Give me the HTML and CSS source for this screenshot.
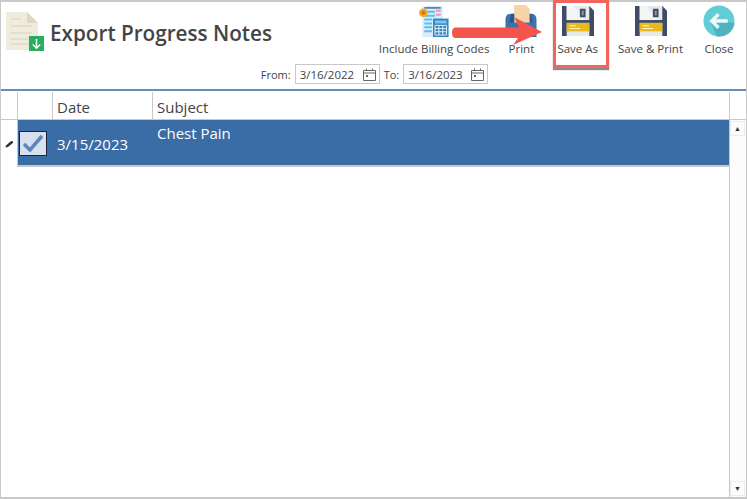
FILE: index.html
```html
<!DOCTYPE html>
<html lang="en">
  <head>
    <meta charset="UTF-8" />
    <title>Export Progress Notes</title>
    <link rel="stylesheet" href="styles.css">
  </head>
  <body>
    <div class="window">
      <header class="header">
        <div class="header-top">
          <div class="brand">
            <svg class="brand-icon" viewBox="0 0 40 40" width="40" height="40">
              <path d="M0 0H21L32 11V38H0Z" fill="#efebdd"/>
              <path d="M21 0L32 11H21Z" fill="#dcd8c4"/>
              <path d="M5 7H15M5 14H26M5 21H26M5 27H26M5 32H26" stroke="#e0dcc9" stroke-width="1.4"/>
              <rect x="23" y="24" width="15" height="15" fill="#27ae60"/>
              <path d="M30.5 27V36M26.800 32.500L30.500 36.200L34.200 32.500" stroke="#fff" stroke-width="1.500" fill="none"/>
            </svg>
            <h1 class="title">Export Progress Notes</h1>
          </div>
          <nav class="actions">
            <button type="button" class="action action-billing">
              <svg viewBox="0 0 32 33" width="32" height="33">
                <rect x="4" y="1" width="21" height="32" fill="#d8edf9"/>
                <path d="M6 3H23" stroke="#3a6ea5" stroke-width="1.500"/>
                <path d="M6 7H17M6 11H17M6 15H14M6 19H14M6 23H14M6 27H14" stroke="#62bbe8" stroke-width="2"/>
                <path d="M18 6H23M18 10H23" stroke="#e89ab0" stroke-width="2"/>
                <circle cx="5" cy="8" r="4.500" fill="#f5a623"/>
                <circle cx="5" cy="8" r="2" fill="#c9791a"/>
                <rect x="15" y="14" width="16" height="19" fill="#2f86c1"/>
                <rect x="17" y="16" width="12" height="3" fill="#7fc6ee"/>
                <path d="M17 21H29V31H17ZM21 21V31M25 21V31M17 24.300H29M17 27.600H29" stroke="#e4f3fc" stroke-width="1" fill="none"/>
              </svg>
              <span>Include Billing Codes</span>
            </button>
            <button type="button" class="action">
              <svg viewBox="0 0 32 33" width="32" height="33">
                <path d="M9 0H21L25 4V18H9Z" fill="#f8d5a8"/>
                <path d="M0 15Q0 9 6 9H9V18H25V9H26Q32 9 32 15V33H0Z" fill="#3d73ab"/>
                <path d="M6 9H9V18H25V9H26L28 18H4Z" fill="#2a5887"/>
              </svg>
              <span>Print</span>
            </button>
            <button type="button" class="action">
              <svg viewBox="0 0 34 32" width="32" height="33">
                <use href="#floppy"/>
              </svg>
              <span>Save As</span>
            </button>
            <button type="button" class="action">
              <svg viewBox="0 0 34 32" width="32" height="33">
                <use href="#floppy"/>
              </svg>
              <span>Save &amp; Print</span>
            </button>
            <button type="button" class="action">
              <svg viewBox="0 0 32 33" width="32" height="33">
                <circle cx="16" cy="16.500" r="16" fill="#62cdd6"/>
                <path d="M24 17L32 19A16 16 0 0 1 14 32.400L7 17Z" fill="#4eb3bf"/>
                <path d="M25 16.500H9M15.500 9.500L8.500 16.500L15.500 23.500" stroke="#eef8f9" stroke-width="3.500" fill="none"/>
              </svg>
              <span>Close</span>
            </button>
          </nav>
        </div>
        <div class="dates">
          <label class="date-label">From:
            <span class="date-box">3/16/2022 <svg class="cal"><use href="#calendar"/></svg></span>
          </label>
          <label class="date-label">To:
            <span class="date-box">3/16/2023 <svg class="cal"><use href="#calendar"/></svg></span>
          </label>
        </div>
      </header>

      <div class="grid">
        <div class="grid-main">
          <div class="row head">
            <div class="cell c-ind"></div>
            <div class="cell c-check"></div>
            <div class="cell c-date">Date</div>
            <div class="cell c-subject">Subject</div>
          </div>
          <div class="row selected">
            <div class="cell c-ind">
              <svg viewBox="0 0 9 8" width="9" height="8"><path d="M0.500 7.500L1 5.500L5.500 1.500Q7 0.500 8 1.500Q8.500 2.500 7.500 3.200L3 7Z" fill="#333"/></svg>
            </div>
            <div class="cell c-check">
              <span class="checkbox">
                <svg viewBox="0 0 22 20" width="22" height="20"><path d="M2 10L8 16L20 2" stroke="#5b86ba" stroke-width="3.500" fill="none"/></svg>
              </span>
            </div>
            <div class="cell c-date">3/15/2023</div>
            <div class="cell c-subject">Chest Pain</div>
          </div>
        </div>
        <div class="scrollbar">
          <div class="scroll-corner"></div>
          <div class="scroll-track">
            <span class="scroll-btn">&#9650;</span>
            <span class="scroll-btn">&#9660;</span>
          </div>
        </div>
      </div>

      <div class="callout"></div>
      <svg class="arrow" viewBox="0 0 92 32" width="92" height="32">
        <path d="M4 12.500H67L62 2L90 17L61 30L66 23H4Q0 23 0 17.500Q0 12.500 4 12.500Z" fill="#f4544c"/>
      </svg>
    </div>

    <svg width="0" height="0" class="defs">
      <symbol id="floppy" viewBox="0 0 34 32">
        <path d="M0 0H29L34 5V32H0Z" fill="#3f4b67"/>
        <rect x="5" y="0" width="24" height="15" fill="#e6ebea"/>
        <path d="M5 0H12L24 15H5Z" fill="#f4f6f5"/>
        <rect x="19" y="3" width="6" height="9" fill="#3f4b67"/>
        <rect x="21" y="5" width="2" height="5" fill="#8f97a8"/>
        <rect x="5" y="18" width="24" height="14" fill="#e6ebea"/>
        <rect x="5" y="18" width="24" height="9" fill="#ecb91c"/>
        <path d="M8 21H15M8 24H19" stroke="#fdf3c8" stroke-width="1.200"/>
      </symbol>
      <symbol id="calendar" viewBox="0 0 13 13">
        <path d="M0.500 2.500H12.500V12.500H0.500ZM0.500 5H12.500M3.500 0.500V3M9.500 0.500V3" stroke="#666" fill="none"/>
        <rect x="3" y="7" width="2" height="2" fill="#666"/>
      </symbol>
    </svg>
  </body>
</html>
```

FILE: styles.css
```css
html, body {
  margin: 0;
  height: 100%;
  background: #fff;
}

body {
  font-family: "Open Sans", "Noto Sans", sans-serif;
  color: #444;
}

.defs {
  position: absolute;
}

.window {
  position: relative;
  box-sizing: border-box;
  width: 747px;
  height: 499px;
  display: flex;
  flex-direction: column;
  border-top: 2px solid #c8c8c8;
  border-left: 1px solid #c8c8c8;
  border-right: 1px solid #c8c8c8;
  border-bottom: 2px solid #c8c8c8;
}

.header {
  height: 87px;
  flex: none;
  border-bottom: 2px solid #6a8db5;
}

.header-top {
  display: flex;
  justify-content: space-between;
  height: 54px;
}

.brand {
  display: flex;
  align-items: center;
  padding: 10px 0 0 5px;
  gap: 4px;
  height: 40px;
}

.title {
  margin: 2px 0 0;
  font-size: 20.700px;
  font-weight: 600;
  color: #444;
}

.actions {
  display: flex;
  gap: 20px;
  padding-right: 11px;
}

.action {
  border: 0;
  background: none;
  padding: 3px 0 0;
  font: inherit;
  font-size: 11.500px;
  color: #444;
  display: flex;
  flex-direction: column;
  justify-content: flex-start;
  align-items: center;
  gap: 4px;
}

.action svg {
  display: block;
}

.action-billing {
  margin-right: -4px;
}

.dates {
  display: flex;
  justify-content: center;
  gap: 4px;
  margin-top: 8px;
  padding-left: 2px;
}

.date-label {
  display: flex;
  align-items: center;
  gap: 4px;
  font-size: 11px;
}

.date-box {
  display: flex;
  align-items: center;
  justify-content: space-between;
  box-sizing: border-box;
  width: 85px;
  height: 20px;
  padding: 0 3px 0 4px;
  border: 1px solid #c8c8c8;
  font-size: 11.500px;
}

.cal {
  width: 13px;
  height: 13px;
}

.grid {
  flex: 1;
  display: flex;
  margin-top: 1px;
  min-height: 0;
}

.grid-main {
  flex: 1;
}

.row {
  display: flex;
}

.head {
  height: 27px;
  border-bottom: 1px solid #c8c8c8;
  font-size: 15px;
}

.head .cell {
  padding-top: 2px;
}

.selected {
  height: 47px;
  font-size: 15px;
}

.cell {
  box-sizing: border-box;
  padding-left: 4px;
}

.c-ind {
  width: 17px;
  padding: 0;
  border-right: 1px solid #c8c8c8;
  display: flex;
  align-items: center;
  justify-content: center;
}

.c-check {
  width: 35px;
  padding: 0 0 0 1px;
  border-right: 1px solid #c8c8c8;
  display: flex;
  align-items: center;
}

.c-date {
  width: 100px;
  border-right: 1px solid #c8c8c8;
  display: flex;
  align-items: center;
}

.c-subject {
  flex: 1;
  display: flex;
  align-items: center;
}

.selected .c-check,
.selected .c-date,
.selected .c-subject {
  background: #3a6ca6;
  color: #fff;
  border-right: 0;
  border-bottom: 2px solid #c8c8c8;
}

.selected .c-check,
.selected .c-date {
  padding-top: 2px;
}

.selected .c-subject {
  align-items: flex-start;
  padding-top: 3px;
}

.checkbox {
  box-sizing: border-box;
  width: 28px;
  height: 25px;
  background: #d6e0ee;
  border: 1px solid #1b2430;
  display: flex;
  align-items: center;
  justify-content: center;
}

.scrollbar {
  width: 16px;
  display: flex;
  flex-direction: column;
  border-left: 1px solid #c8c8c8;
}

.scroll-corner {
  height: 27px;
  flex: none;
  border-bottom: 1px solid #c8c8c8;
}

.scroll-track {
  flex: 1;
  display: flex;
  flex-direction: column;
  justify-content: space-between;
  background: #fcfcfc;
  padding: 1px 0;
}

.scroll-btn {
  box-sizing: border-box;
  width: 15px;
  height: 15px;
  border: 1px solid #ececec;
  font-size: 7px;
  line-height: 13px;
  text-align: center;
  color: #333;
}

/* annotation over the toolbar */
.callout {
  position: absolute;
  left: 552px;
  top: -2px;
  width: 56px;
  height: 68px;
  box-sizing: border-box;
  border: 3px solid #f4645c;
  box-shadow: 0 2px 1px #8a8a8a;
}

.arrow {
  position: absolute;
  left: 451px;
  top: 13px;
}
```
